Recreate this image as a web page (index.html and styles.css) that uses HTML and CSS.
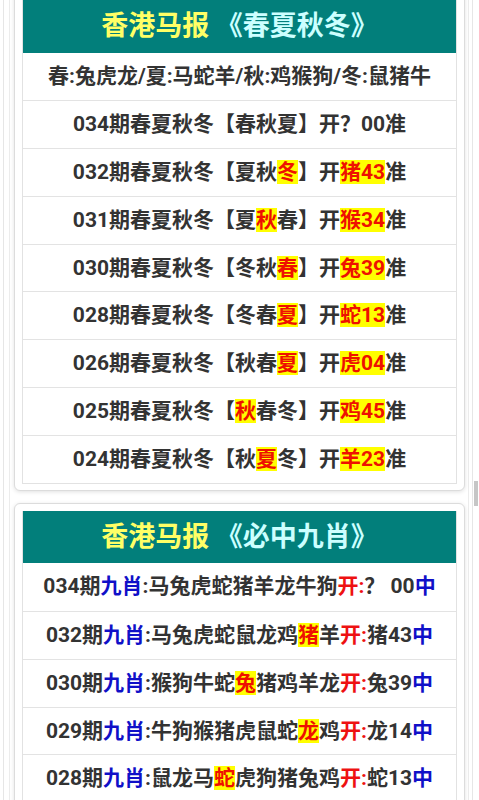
FILE: index.html
```html
<!DOCTYPE html>
<html lang="zh-CN">
<head>
  <meta charset="UTF-8" />
  <title>香港马报</title>
  <meta name="viewport" content="width=device-width, initial-scale=1.0" />
  <link rel="stylesheet" href="styles.css">
</head>
<body>
  <div class="page">
    <div class="frame">

      <div class="card first">
        <div class="list">
          <div class="head"><span class="yl">香港马报</span> <span class="cy">《春夏秋冬》</span></div>
          <div class="row">春:兔虎龙/夏:马蛇羊/秋:鸡猴狗/冬:鼠猪牛</div>
          <div class="row">034期春夏秋冬【春秋夏】开？00准</div>
          <div class="row">032期春夏秋冬【夏秋<span class="hit">冬</span>】开<span class="hit">猪43</span>准</div>
          <div class="row">031期春夏秋冬【夏<span class="hit">秋</span>春】开<span class="hit">猴34</span>准</div>
          <div class="row">030期春夏秋冬【冬秋<span class="hit">春</span>】开<span class="hit">兔39</span>准</div>
          <div class="row">028期春夏秋冬【冬春<span class="hit">夏</span>】开<span class="hit">蛇13</span>准</div>
          <div class="row">026期春夏秋冬【秋春<span class="hit">夏</span>】开<span class="hit">虎04</span>准</div>
          <div class="row">025期春夏秋冬【<span class="hit">秋</span>春冬】开<span class="hit">鸡45</span>准</div>
          <div class="row">024期春夏秋冬【秋<span class="hit">夏</span>冬】开<span class="hit">羊23</span>准</div>
        </div>
      </div>

      <div class="card">
        <div class="list">
          <div class="head"><span class="yl">香港马报</span> <span class="cy">《必中九肖》</span></div>
          <div class="row">034期<span class="bl">九肖</span>:马兔虎蛇猪羊龙牛狗<span class="rd">开:</span>？ 00<span class="bl">中</span></div>
          <div class="row">032期<span class="bl">九肖</span>:马兔虎蛇鼠龙鸡<span class="hit">猪</span>羊<span class="rd">开:</span>猪43<span class="bl">中</span></div>
          <div class="row">030期<span class="bl">九肖</span>:猴狗牛蛇<span class="hit">兔</span>猪鸡羊龙<span class="rd">开:</span>兔39<span class="bl">中</span></div>
          <div class="row">029期<span class="bl">九肖</span>:牛狗猴猪虎鼠蛇<span class="hit">龙</span>鸡<span class="rd">开:</span>龙14<span class="bl">中</span></div>
          <div class="row">028期<span class="bl">九肖</span>:鼠龙马<span class="hit">蛇</span>虎狗猪兔鸡<span class="rd">开:</span>蛇13<span class="bl">中</span></div>
        </div>
      </div>

    </div>
  </div>
  <div class="thumb"></div>
</body>
</html>
```

FILE: styles.css
```css
html, body {
  overflow: hidden;
}

body {
  margin: 0;
  background: #fff;
  color: #333;
  font-family: Roboto, "Noto Sans CJK SC", sans-serif;
}

.page {
  margin: 0 6px 0 3px;
  padding: 0 3px 0 5px;
  border-left: 1px solid #e6e6e6;
  border-right: 1px solid #e6e6e6;
  min-height: 800px;
}

.frame {
  padding: 0 3px 0 4px;
  border-left: 1px solid #ececec;
  border-right: 1px solid #ececec;
  min-height: 800px;
}

.card {
  background: #fff;
  border: 1px solid #dcdcdc;
  border-radius: 6px;
  padding: 7px;
  margin-bottom: 12px;
  box-shadow: 0 1px 4px rgba(0, 0, 0, 0.12);
}

.card.first {
  margin-top: -8px;
  padding-bottom: 6px;
}

.list {
  border: 1px solid #e2e2e2;
  border-top: none;
}

.head {
  background: #027f7b;
  height: 52.5px;
  line-height: 52px;
  text-align: center;
  font-size: 27px;
  font-weight: 700;
  white-space: nowrap;
}

.yl {
  color: #ffff66;
}

.cy {
  color: #ccffff;
}

.row {
  height: 47.8px;
  box-sizing: border-box;
  line-height: 46px;
  text-align: center;
  border-top: 1px solid #e3e3e3;
  font-size: 21px;
  font-weight: 700;
  white-space: pre;
}

.head + .row {
  border-top: none;
}

.hit {
  background: #ffff00;
  color: #ee1100;
}

.bl {
  color: #1010c8;
}

.rd {
  color: #ee1111;
}

.thumb {
  position: fixed;
  right: 1px;
  top: 481px;
  width: 4px;
  height: 25px;
  background: #c6c6c6;
}
```
